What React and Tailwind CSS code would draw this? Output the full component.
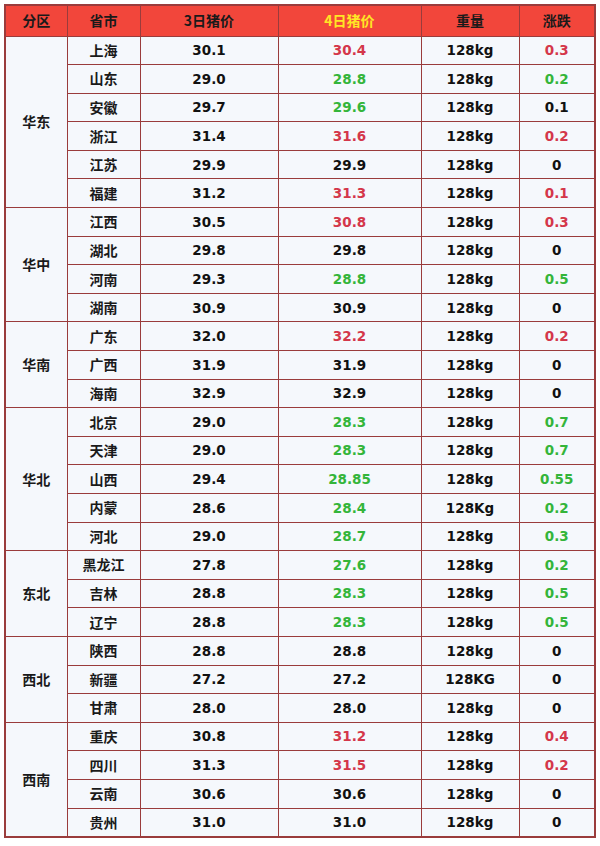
import React from "react";

// c: colour of 4日 price and change — r red, g green, k black
const regions = [
  {
    name: "华东",
    rows: [
      ["上海", "30.1", "30.4", "128kg", "0.3", "r"],
      ["山东", "29.0", "28.8", "128kg", "0.2", "g"],
      ["安徽", "29.7", "29.6", "128kg", "0.1", "g", "k"],
      ["浙江", "31.4", "31.6", "128kg", "0.2", "r"],
      ["江苏", "29.9", "29.9", "128kg", "0", "k"],
      ["福建", "31.2", "31.3", "128kg", "0.1", "r"],
    ],
  },
  {
    name: "华中",
    rows: [
      ["江西", "30.5", "30.8", "128kg", "0.3", "r"],
      ["湖北", "29.8", "29.8", "128kg", "0", "k"],
      ["河南", "29.3", "28.8", "128kg", "0.5", "g"],
      ["湖南", "30.9", "30.9", "128kg", "0", "k"],
    ],
  },
  {
    name: "华南",
    rows: [
      ["广东", "32.0", "32.2", "128kg", "0.2", "r"],
      ["广西", "31.9", "31.9", "128kg", "0", "k"],
      ["海南", "32.9", "32.9", "128kg", "0", "k"],
    ],
  },
  {
    name: "华北",
    rows: [
      ["北京", "29.0", "28.3", "128kg", "0.7", "g"],
      ["天津", "29.0", "28.3", "128kg", "0.7", "g"],
      ["山西", "29.4", "28.85", "128kg", "0.55", "g"],
      ["内蒙", "28.6", "28.4", "128Kg", "0.2", "g"],
      ["河北", "29.0", "28.7", "128kg", "0.3", "g"],
    ],
  },
  {
    name: "东北",
    rows: [
      ["黑龙江", "27.8", "27.6", "128kg", "0.2", "g"],
      ["吉林", "28.8", "28.3", "128kg", "0.5", "g"],
      ["辽宁", "28.8", "28.3", "128kg", "0.5", "g"],
    ],
  },
  {
    name: "西北",
    rows: [
      ["陕西", "28.8", "28.8", "128kg", "0", "k"],
      ["新疆", "27.2", "27.2", "128KG", "0", "k"],
      ["甘肃", "28.0", "28.0", "128kg", "0", "k"],
    ],
  },
  {
    name: "西南",
    rows: [
      ["重庆", "30.8", "31.2", "128kg", "0.4", "r"],
      ["四川", "31.3", "31.5", "128kg", "0.2", "r"],
      ["云南", "30.6", "30.6", "128kg", "0", "k"],
      ["贵州", "31.0", "31.0", "128kg", "0", "k"],
    ],
  },
];

const colorCls = {
  r: "text-[#d4374a]",
  g: "text-[#34b53a]",
  k: "text-[#111111]",
};

const cjk = "font-['Noto_Sans_CJK_SC',sans-serif]";
const num = "font-['DejaVu_Sans',sans-serif] text-[13.5px] font-bold";
const cell = "border border-[#9a3c3c] text-center p-0";

export default function App() {
  return (
    <div className="bg-white w-[600px] h-[846px] pt-[4px] pl-[4px]">
      <table className="border-collapse table-fixed w-[590px] border-2 border-[#9a3c3c]">
        <colgroup>
          <col className="w-[62px]" />
          <col className="w-[73px]" />
          <col className="w-[138px]" />
          <col className="w-[143px]" />
          <col className="w-[98px]" />
          <col className="w-[76px]" />
        </colgroup>
        <thead>
          <tr className={`h-[31px] bg-[#f2463b] ${cjk} text-[14px] font-bold text-[#1a1a1a]`}>
            <th className={cell}>分区</th>
            <th className={cell}>省市</th>
            <th className={cell}>3日猪价</th>
            <th className={`${cell} text-[#ffe625]`}>4日猪价</th>
            <th className={cell}>重量</th>
            <th className={cell}>涨跌</th>
          </tr>
        </thead>
        <tbody className="bg-[#f5f8fc]">
          {regions.map((g) =>
            g.rows.map((r, i) => (
              <tr key={g.name + r[0]} className="h-[28.6px]">
                {i === 0 && (
                  <td rowSpan={g.rows.length} className={`${cell} ${cjk} text-[14px] font-bold text-[#1a1a1a]`}>
                    {g.name}
                  </td>
                )}
                <td className={`${cell} ${cjk} text-[14px] font-bold text-[#1a1a1a]`}>{r[0]}</td>
                <td className={`${cell} ${num} text-[#111111]`}>{r[1]}</td>
                <td className={`${cell} ${num} ${colorCls[r[5]]}`}>{r[2]}</td>
                <td className={`${cell} ${num} text-[#111111]`}>{r[3]}</td>
                <td className={`${cell} ${num} ${colorCls[r[6] || r[5]]}`}>{r[4]}</td>
              </tr>
            ))
          )}
        </tbody>
      </table>
    </div>
  );
}
